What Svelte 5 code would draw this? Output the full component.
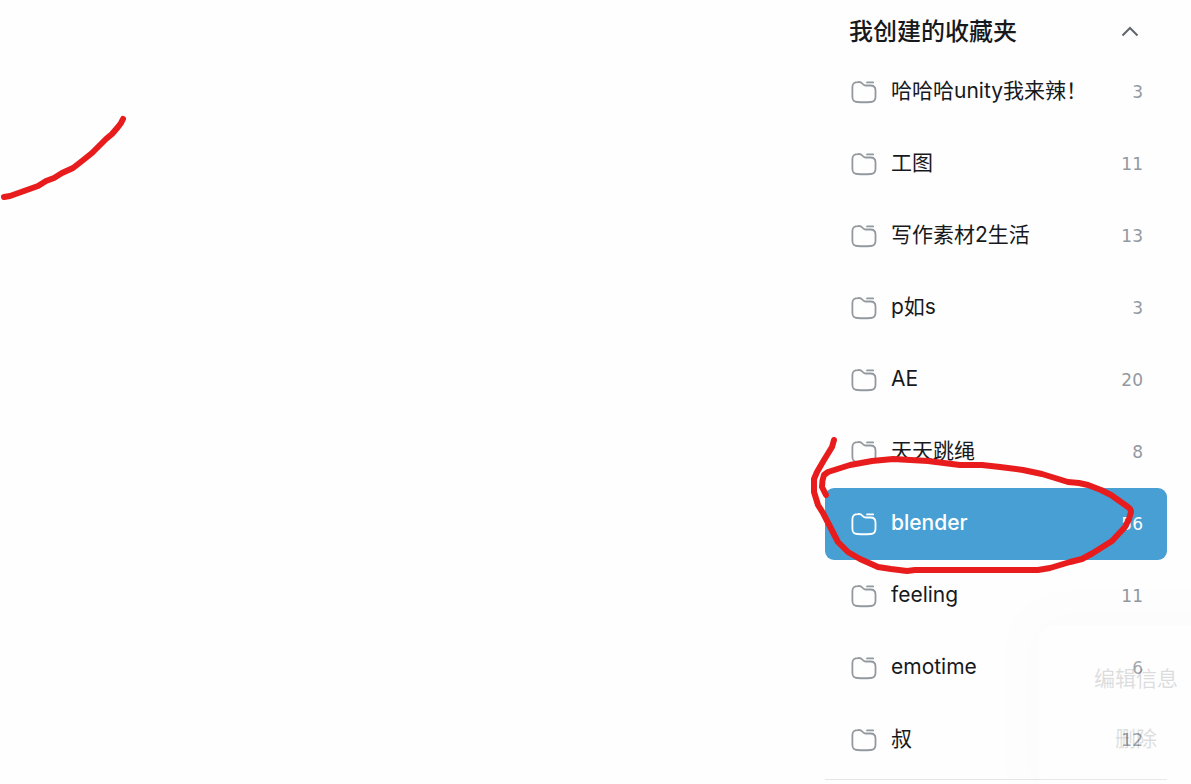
<script lang="ts">
  type Folder = { name: string; count: number };

  const folders: Folder[] = [
    { name: '哈哈哈unity我来辣！', count: 3 },
    { name: '工图', count: 11 },
    { name: '写作素材2生活', count: 13 },
    { name: 'p如s', count: 3 },
    { name: 'AE', count: 20 },
    { name: '天天跳绳', count: 8 },
    { name: 'blender', count: 56 },
    { name: 'feeling', count: 11 },
    { name: 'emotime', count: 6 },
    { name: '叔', count: 12 },
  ];
  const actions = ['编辑信息', '删除'];

  let active = $state('blender');
  let open = $state(true);
</script>

<div class="page">
  <main>
    <svg class="stroke" width="140" height="210" viewBox="0 0 140 210" aria-hidden="true">
      <path d="M4 197L10 196L24 191L38 186L46 181L54 178L62 173L73 168L82 161L92 153L98 147L106 139L112 134L118 127L121 123L123 119" />
    </svg>
  </main>

  <aside>
    <header>
      <h2>我创建的收藏夹</h2>
      <button class="toggle" aria-label="收起" aria-expanded={open} onclick={() => (open = !open)}>
        <svg width="20" height="20" viewBox="0 0 20 20"><path d="M2.500 13.500L10 6l7.500 7.500" /></svg>
      </button>
    </header>

    {#if open}
      <ul>
        {#each folders as f}
          <li>
            <button class="folder" class:active={active === f.name} onclick={() => (active = f.name)}>
              <svg class="icon" width="28" height="28" viewBox="0 0 28 28" aria-hidden="true">
                <path d="M8 4C10.500 3.800 11.500 4.500 12.500 5.800C13.500 7.100 14 7.500 15.500 7.500H20.500C24.400 7.500 25.500 9 25.500 12.400V18.700C25.500 22.600 24 23.800 20.500 24Q14 24.500 7.500 24C3.800 23.800 2.400 22.600 2.400 18.700V9.500C2.400 5.600 3.800 4.100 8 4ZM17 4.400H23.200" />
              </svg>
              <span class="name">{f.name}</span>
              <span class="count">{f.count}</span>
            </button>
          </li>
        {/each}
      </ul>
    {/if}

    <div class="menu">
      {#each actions as action}
        <button>{action}</button>
      {/each}
    </div>

    <svg class="circle" width="342" height="160" viewBox="0 0 342 160" aria-hidden="true">
      <path d="M9 10L7 17L-1 30L-8 42L-11 49V62L-7 75L-2 83L13 112L23 122L35 129L53 137L66 139L82 141L90 140H213L225 138L245 132L257 129L268 123L287 111L300 97L304 89L306 82Q306 79 303 77L286 65L276 60L263 55L254 53L243 52L217 44L198 40L175 37L157 35H135L103 31L68 29L47 31L25 35L3 42L-1 45Q-3 50 -3 57L1 65" />
    </svg>
  </aside>
</div>

<style>
  :global(body) { margin: 0; background: #fefefe; }
  .page {
    display: flex; min-height: 100vh; position: relative; overflow: hidden;
    font-family: Inter, "Noto Sans CJK SC", sans-serif; color: #18191c;
  }
  main { flex: 1; min-width: 0; position: relative; }
  aside {
    position: relative; box-sizing: border-box; width: 342px; flex: none;
    margin-right: 24px; align-self: flex-start;
    padding-bottom: 3px; border-bottom: 1px solid #e3e5e7;
  }
  header {
    display: flex; align-items: center; justify-content: space-between;
    height: 56px; padding: 7px 24px 0; box-sizing: border-box;
  }
  h2 { margin: 0; font-size: 24px; line-height: 32px; font-weight: 500; }
  button { font: inherit; color: inherit; background: none; border: 0; padding: 0; cursor: pointer; }
  .toggle { display: flex; margin-right: 3px; }
  .toggle path { fill: none; stroke: #61666d; stroke-width: 2; }
  ul { list-style: none; margin: 0; padding: 0; }
  .folder {
    display: flex; align-items: center; gap: 13px; width: 100%; height: 72px;
    padding: 0 24px 0 25px; border-radius: 9px; text-align: left;
  }
  .icon { flex: none; fill: none; stroke: #9499a0; stroke-width: 1.8; stroke-linecap: round; }
  .name { flex: 1; font-size: 21px; line-height: 32px; padding-bottom: 2px; }
  .count { font-family: "DejaVu Sans", sans-serif; font-size: 17px; line-height: 28px; color: #9499a0; }
  .active { background: #479fd3; color: #fff; font-weight: 500; }
  .active .icon { stroke: #fff; }
  .active .count { color: #fff; }
  .menu {
    position: absolute; top: 625px; left: 214px; width: 194px; box-sizing: border-box;
    display: flex; flex-direction: column; padding: 22px 0 24px; border-radius: 16px;
    background: #fff; box-shadow: 0 0 40px rgba(0,0,0,.1); opacity: .14;
    pointer-events: none;
  }
  .menu button { height: 60px; font-size: 21px; }
  .stroke, .circle {
    position: absolute; overflow: visible; pointer-events: none; fill: none;
    stroke: #e81c1c; stroke-width: 6; stroke-linecap: round; stroke-linejoin: round;
  }
  .stroke { top: 0; left: 0; }
  .circle { top: 430px; left: 0; }
</style>
